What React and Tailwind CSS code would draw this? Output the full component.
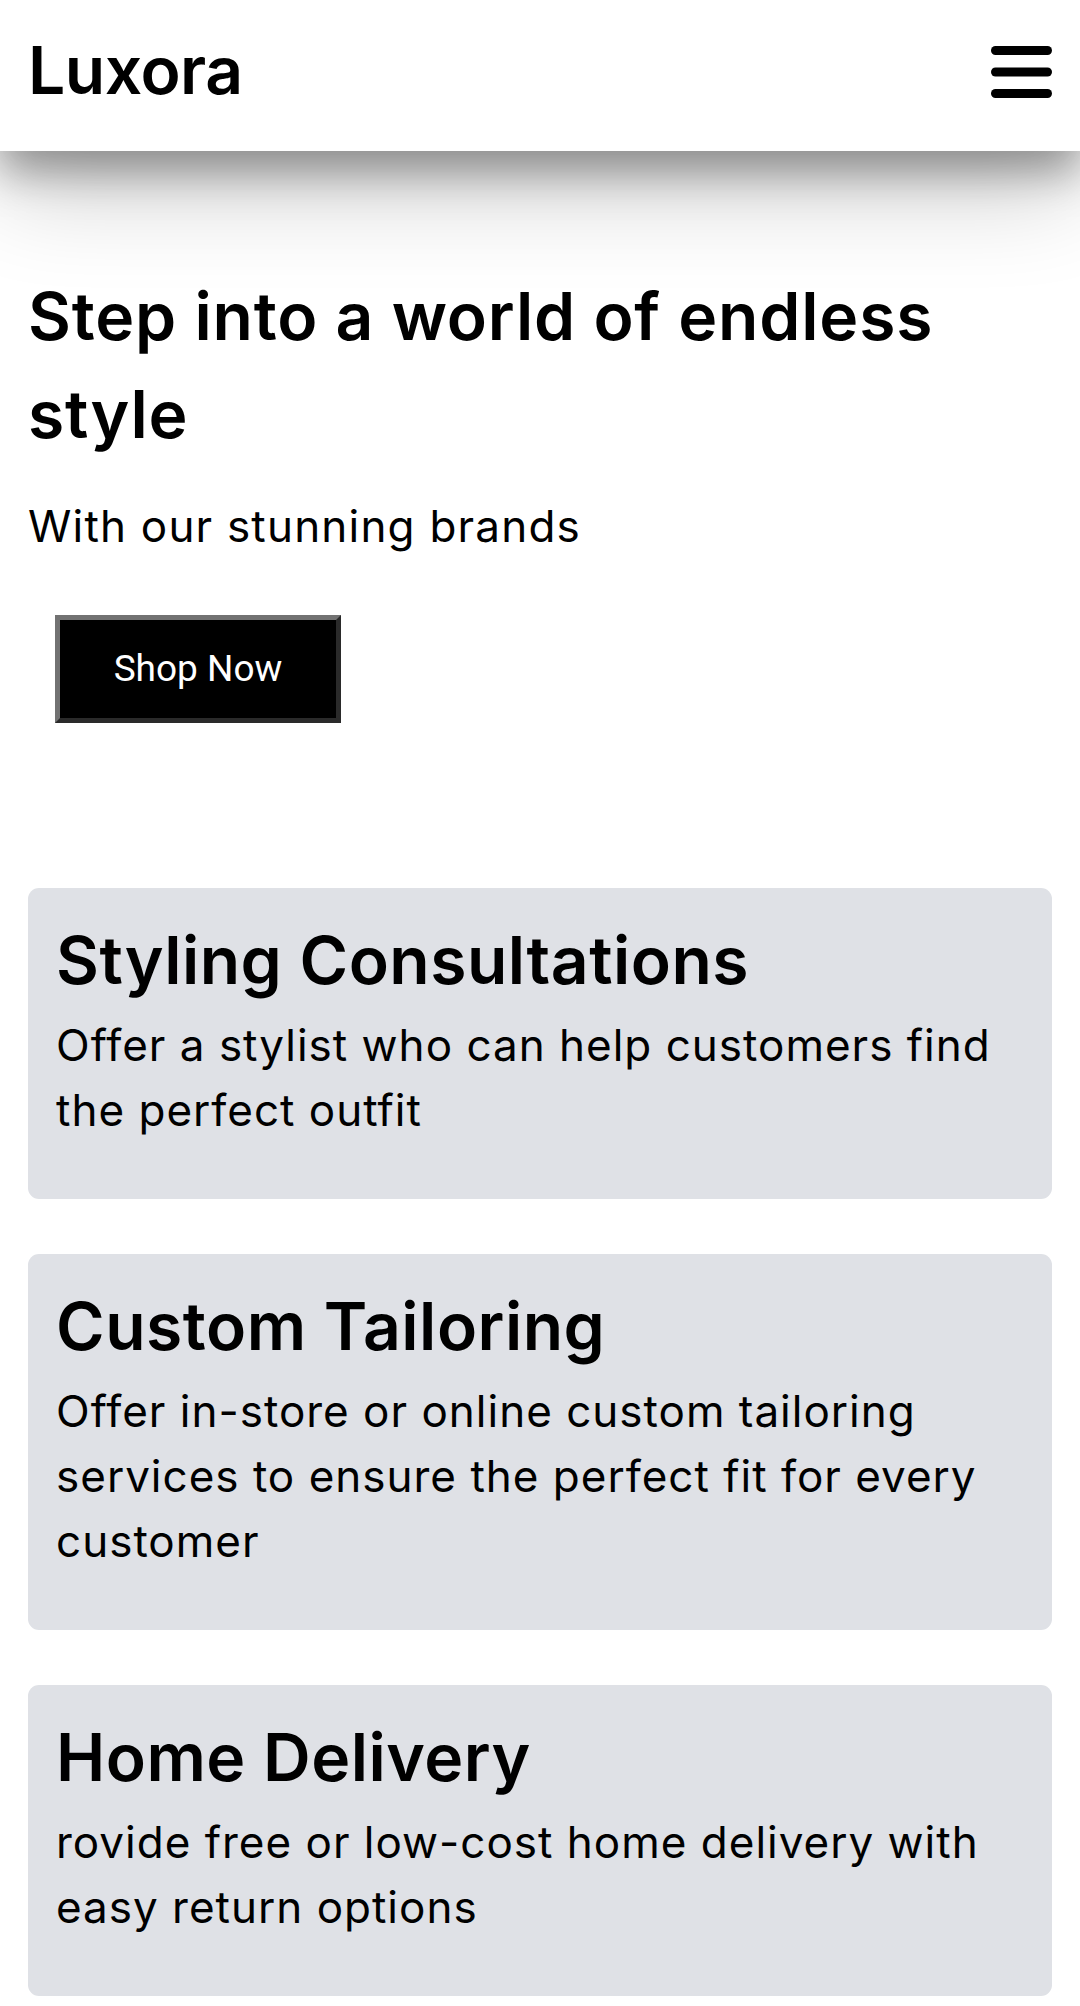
import React from 'react';

const features = [
  {
    title: 'Styling Consultations',
    text: 'Offer a stylist who can help customers find the perfect outfit',
  },
  {
    title: 'Custom Tailoring',
    text: 'Offer in-store or online custom tailoring services to ensure the perfect fit for every customer',
  },
  {
    title: 'Home Delivery',
    text: 'rovide free or low-cost home delivery with easy return options',
  },
];

const MenuIcon = () => (
  <svg width="61" height="52" viewBox="0 0 61 52" fill="#000">
    <rect x="0" y="0" width="61" height="9" rx="4.5" />
    <rect x="0" y="21.5" width="61" height="9" rx="4.5" />
    <rect x="0" y="43" width="61" height="9" rx="4.5" />
  </svg>
);

export default function App() {
  return (
    <div className="min-h-[2006px] bg-white text-black font-['Inter','Noto_Sans',sans-serif]">
      {/* Header */}
      <header className="relative z-10 flex h-[151px] items-center justify-between bg-white px-[28px] shadow-[0_20px_40px_rgba(0,0,0,0.35),0_40px_100px_rgba(0,0,0,0.2)]">
        <span className="mt-[-11px] text-[66px] font-semibold leading-none tracking-[-0.5px]">Luxora</span>
        <button className="mt-[-8px]" aria-label="menu">
          <MenuIcon />
        </button>
      </header>

      {/* Hero */}
      <section className="px-[28px] pt-[116px]">
        <h1 className="text-[66px] font-semibold leading-[98px] tracking-[0.8px]">Step into a world of endless style</h1>
        <p className="mt-[30px] text-[44px] leading-[66px] tracking-[1.2px]">With our stunning brands</p>
        <button className="ml-[27px] mt-[56px] flex h-[108px] w-[286px] items-center justify-center border-[5px] border-t-[#727272] border-l-[#727272] border-b-[#2a2a2a] border-r-[#2a2a2a] bg-black font-['Roboto',sans-serif] text-[37px] text-white">
          Shop Now
        </button>
      </section>

      {/* Features */}
      <section className="mt-[165px] flex flex-col gap-[55px] px-[28px] pb-[9px]">
        {features.map((f) => (
          <div key={f.title} className="rounded-[11px] bg-[#dfe1e6] px-[28px] pt-[20px] pb-[56px]">
            <h2 className="text-[66px] font-semibold leading-[105px] tracking-[0.5px]">{f.title}</h2>
            <p className="text-[44px] leading-[65px] tracking-[1px]">{f.text}</p>
          </div>
        ))}
      </section>
    </div>
  );
}
